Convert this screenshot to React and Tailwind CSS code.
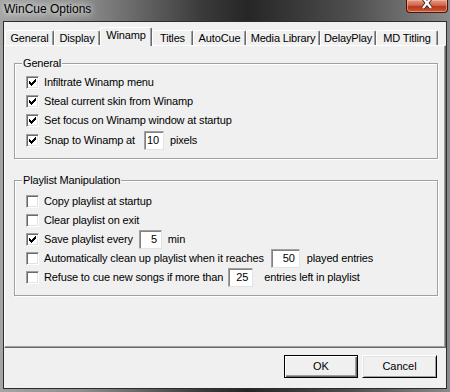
import React from 'react'

const tabs = [
  { label: 'General', w: 'w-[49px]' },
  { label: 'Display', w: 'w-[46px]' },
  { label: 'Winamp', w: 'w-[52px]', active: true },
  { label: 'Titles', w: 'w-[41px]' },
  { label: 'AutoCue', w: 'w-[53px]' },
  { label: 'Media Library', w: 'w-[74px]' },
  { label: 'DelayPlay', w: 'w-[56px]' },
  { label: 'MD Titling', w: 'w-[62px]' },
]

function Check({ checked }) {
  return (
    <span className="w-[13px] h-[13px] shrink-0 bg-white border border-[#a0a0a0] border-r-white border-b-white shadow-[inset_1px_1px_0_#696969,inset_-1px_-1px_0_#e3e3e3] relative">
      {checked && (
        <svg width="13" height="13" viewBox="0 0 13 13" className="absolute -left-px -top-px" shapeRendering="crispEdges">
          <path d="M3 5 L5 7 L10 2 L10 5 L5 10 L3 8 Z" fill="#000" />
        </svg>
      )}
    </span>
  )
}

function Field({ value, w, ml }) {
  return (
    <span className={`${w} ${ml} h-[19px] shrink-0 bg-white border border-[#a0a0a0] border-r-[#e3e3e3] border-b-[#e3e3e3] shadow-[inset_1px_1px_0_#828282] flex items-center justify-end pr-[4px]`}>
      {value}
    </span>
  )
}

function Row({ checked, children, className = '' }) {
  return (
    <div className={`h-[19px] flex items-center ${className}`}>
      <Check checked={checked} />
      <div className="ml-[5px] flex items-center whitespace-nowrap">{children}</div>
    </div>
  )
}

function Group({ title, className, children }) {
  return (
    <div className={`relative ml-[9px] mr-[7px] border border-[#a0a0a0] shadow-[inset_1px_1px_0_#fff,1px_1px_0_#fff] pl-[11px] ${className}`}>
      <span className="absolute -top-[7px] left-[7px] px-px bg-[#f0f0f0] leading-[13px]">{title}</span>
      {children}
    </div>
  )
}

export default function App() {
  return (
    <div className="w-[450px] h-[392px] relative overflow-hidden flex flex-col px-[3px] pb-[3px] pt-[21px] bg-[linear-gradient(90deg,#a4a4a4_0%,#8e8e8e_18%,#3a3a3a_45%,#262626_55%,#4e4e4e_78%,#8a8a8a_100%)] font-['Liberation_Sans',Arial,sans-serif] text-[11px] tracking-[-0.15px] text-black">
      <div className="absolute top-[2px] left-[4px] text-[12px] tracking-normal leading-[15px] text-black [text-shadow:0_0_6px_#fff,0_0_10px_#ddd]">
        WinCue Options
      </div>
      <div className="absolute top-0 right-[2px] w-[42px] h-[13px] rounded-b-[4px] border border-t-0 border-[#4a1408] bg-[linear-gradient(180deg,#e89a84_0%,#d0644a_45%,#b8381c_55%,#cc5a38_100%)] shadow-[inset_0_0_0_1px_rgba(255,200,180,0.5)] flex justify-center">
        <svg width="14" height="10" viewBox="0 0 14 10">
          <path d="M3 -2 L11 8 M11 -2 L3 8" stroke="#3a1a10" strokeWidth="4" />
          <path d="M3 -2 L11 8 M11 -2 L3 8" stroke="#fff" strokeWidth="2.4" />
        </svg>
      </div>

      <div className="flex-1 flex flex-col border border-[#2c2c2c] bg-[#f0f0f0]">
        <div className="pt-[5px] pl-px flex items-end h-[23px]">
          {tabs.map(t => (
            <div
              key={t.label}
              className={`${t.w} shrink-0 flex items-center justify-center rounded-t-[2px] border-t border-l border-white border-r border-r-[#696969] shadow-[inset_-1px_0_0_#a0a0a0] bg-[#f0f0f0] whitespace-nowrap ${t.active ? 'h-[19px] -mb-px relative z-10 pb-[3px]' : 'h-[15px]'}`}
            >
              {t.label}
            </div>
          ))}
        </div>

        <div className="h-[303px] border-t border-l border-white border-r border-b border-r-[#696969] border-b-[#696969] shadow-[inset_-1px_-1px_0_#a0a0a0] pt-[17px]">
          <Group title="General" className="h-[96px] pt-[9px]">
            <Row checked>Infiltrate Winamp menu</Row>
            <Row checked>Steal current skin from Winamp</Row>
            <Row checked>Set focus on Winamp window at startup</Row>
            <Row checked className="mt-px">
              <span>Snap to Winamp at</span>
              <Field value="10" w="w-[20px]" ml="ml-[9px]" />
              <span className="ml-[6px]">pixels</span>
            </Row>
          </Group>

          <Group title="Playlist Manipulation" className="h-[116px] mt-[21px] pt-[11px]">
            <Row>Copy playlist at startup</Row>
            <Row>Clear playlist on exit</Row>
            <Row checked>
              <span>Save playlist every</span>
              <Field value="5" w="w-[23px]" ml="ml-[6px]" />
              <span className="ml-[6px]">min</span>
            </Row>
            <Row>
              <span>Automatically clean up playlist when it reaches</span>
              <Field value="50" w="w-[29px]" ml="ml-[7px]" />
              <span className="ml-[7px]">played entries</span>
            </Row>
            <Row>
              <span>Refuse to cue new songs if more than</span>
              <Field value="25" w="w-[25px]" ml="ml-[5px]" />
              <span className="ml-[11px]">entries left in playlist</span>
            </Row>
          </Group>
        </div>

        <div className="flex justify-end gap-[4px] pr-[9px] mt-[7px] tracking-normal">
          <button className="w-[74px] h-[23px] border border-black bg-[#f0f0f0] shadow-[inset_1px_1px_0_#fff,inset_-1px_-1px_0_#696969,inset_-2px_-2px_0_#a0a0a0]">
            OK
          </button>
          <button className="w-[75px] h-[23px] border border-white border-r-black border-b-black bg-[#f0f0f0] shadow-[inset_1px_1px_0_#e3e3e3,inset_-1px_-1px_0_#a0a0a0]">
            Cancel
          </button>
        </div>
      </div>
    </div>
  )
}
